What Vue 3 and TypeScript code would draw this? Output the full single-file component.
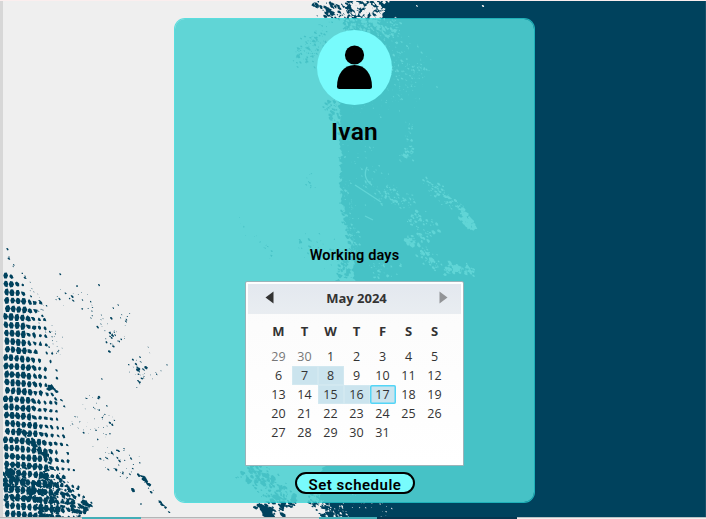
<script setup lang="ts">
type Mark = { x: number; y: number; r: number }

let seed = 20240517
const rnd = (): number => {
  seed = (seed * 1664525 + 1013904223) % 4294967296
  return seed / 4294967296
}
const spread = (): number => rnd() + rnd() + rnd() - 1.5

// A small irregular fleck; a higher roughness gives a more ragged outline.
const fleck = (x: number, y: number, rx: number, ry: number, a = 0, rough = 0.65): string => {
  let d = ''
  for (let i = 0; i < 6; i++) {
    const t = (i * Math.PI) / 3
    const k = 1.25 - rough + rnd() * rough
    const px = Math.cos(t) * rx * k
    const py = Math.sin(t) * ry * k
    const qx = x + px * Math.cos(a) - py * Math.sin(a)
    const qy = y + px * Math.sin(a) + py * Math.cos(a)
    d += (i ? 'L' : 'M') + qx.toFixed(1) + ' ' + qy.toFixed(1)
  }
  return d + 'Z'
}

// Flecks scattered around the line from one point to another.
const trail = (x1: number, y1: number, x2: number, y2: number, width: number, n: number, size: number): string => {
  let d = ''
  const len = Math.hypot(x2 - x1, y2 - y1) || 1
  for (let i = 0; i < n; i++) {
    const t = rnd()
    const o = spread() * width
    const r = size * (0.35 + rnd() * rnd() * 1.3)
    d += fleck(x1 + (x2 - x1) * t - ((y2 - y1) / len) * o, y1 + (y2 - y1) * t + ((x2 - x1) / len) * o, r * 1.3, r * 0.8, 0.7)
  }
  return d
}

const spots = (list: Mark[]): string => list.map(m => fleck(m.x, m.y, m.r * 1.4, m.r, 0.8)).join('')

// Halftone dots: full on the left, thinning along a diagonal edge.
let halftone = ''
for (let row = 0; row < 30; row++) {
  const y = 275.5 + row * 8.2
  const solid = row < 4 ? 9 + row * 6 : 24 + Math.min(row, 19) * 0.5 + Math.max(0, row - 17) * 2.2
  const fade = row < 3 ? 8 : 17 + Math.min(row, 15) * 0.9
  for (let c = 0; c < 15; c++) {
    const x = 5.5 + c * 5.6 + (row % 5) * 0.5
    if (x > solid + fade) break
    const k = x < solid ? 1 : 1 - (x - solid) / fade
    if (k < 0.8 && rnd() > k + 0.4) continue
    const s = 0.5 + 0.5 * k
    halftone += fleck(x, y + c * 0.5, 2.45 * s, 3.5 * s, k < 1 ? -0.5 : 0, k < 1 ? 0.7 : 0.35)
  }
}

const ink =
  halftone +
  trail(3, 247, 26, 278, 3, 9, 1.7) +
  trail(30, 280, 60, 355, 7, 44, 0.9) +
  trail(48, 385, 66, 406, 4, 10, 1.8) +
  trail(55, 300, 90, 292, 9, 14, 1) +
  trail(85, 305, 120, 343, 13, 34, 1) +
  trail(106, 328, 118, 338, 3, 8, 1.4) +
  trail(110, 310, 130, 322, 7, 12, 1) +
  trail(137, 350, 151, 382, 18, 32, 0.95) +
  trail(136, 369, 150, 370, 3, 9, 1.6) +
  trail(85, 400, 118, 430, 12, 25, 0.85) +
  trail(72, 420, 105, 440, 12, 25, 0.85) +
  trail(106, 448, 132, 474, 14, 38, 1.1) +
  trail(133, 467, 169, 513, 3, 20, 1.6) +
  trail(142, 474, 147, 481, 2, 6, 2) +
  trail(18, 429, 52, 462, 3, 60, 1.7) +
  trail(3, 470, 62, 514, 14, 230, 2) +
  trail(40, 475, 86, 512, 11, 180, 2) +
  trail(3, 480, 3, 515, 20, 45, 1.6) +
  trail(314, 0, 370, 9, 14, 100, 1.5) +
  trail(325, 14, 372, 14, 9, 90, 1.9) +
  trail(301, 45, 312, 58, 17, 65, 1.2) +
  trail(315, 24, 340, 90, 17, 85, 1.1) +
  trail(328, 101, 345, 118, 13, 90, 1.6) +
  trail(341, 105, 344, 215, 3, 95, 1.4) +
  trail(345, 210, 354, 260, 4, 65, 1.5) +
  trail(236, 220, 275, 255, 5, 18, 0.8) +
  trail(300, 240, 350, 262, 13, 60, 1) +
  trail(340, 250, 348, 279, 8, 65, 1.6) +
  trail(306, 172, 312, 190, 5, 11, 0.9) +
  trail(248, 466, 290, 509, 14, 210, 2) +
  trail(256, 505, 274, 515, 4, 55, 2.5) +
  trail(315, 490, 330, 513, 10, 85, 1.8) +
  spots([{ x: 133, y: 490, r: 1.8 }, { x: 77, y: 286, r: 1 }, { x: 60, y: 274, r: 0.9 }, { x: 99, y: 285, r: 0.9 }, { x: 99, y: 397, r: 1 }, { x: 102, y: 379, r: 0.8 }, { x: 141, y: 504, r: 0.9 }])

const paper =
  trail(352, 3, 382, 17, 15, 190, 2) +
  trail(342, 24, 400, 30, 10, 140, 1.5) +
  trail(372, 38, 422, 80, 23, 170, 1) +
  trail(350, 104, 428, 88, 23, 75, 0.7) +
  trail(410, 122, 409, 155, 4, 30, 1.1) +
  trail(399, 158, 414, 152, 6, 24, 1.4) +
  trail(350, 135, 383, 205, 15, 75, 0.9) +
  trail(384, 190, 413, 205, 10, 65, 1.2) +
  trail(410, 215, 435, 236, 9, 55, 1.5) +
  trail(424, 180, 463, 212, 6, 85, 1.4) +
  trail(462, 214, 473, 229, 4, 65, 1.9) +
  trail(406, 244, 423, 235, 7, 32, 1.8) +
  trail(420, 250, 440, 270, 7, 38, 1.6) +
  trail(445, 268, 474, 271, 6, 70, 1.8) +
  trail(347, 180, 356, 255, 6, 75, 1) +
  trail(370, 262, 398, 274, 11, 42, 1.1) +
  trail(315, 503, 350, 516, 9, 55, 1.3) +
  trail(345, 496, 402, 513, 12, 30, 0.7) +
  spots([{ x: 417, y: 6, r: 0.8 }, { x: 483, y: 6, r: 0.9 }, { x: 437, y: 87, r: 0.8 }])

// Ragged left boundary of the dark field.
const anchors: [number, number][] = [[351, 0], [345, 20], [338, 60], [336, 90], [341, 115], [341, 195], [345, 218], [352, 242], [354, 280], [340, 380], [322, 475], [321, 502], [329, 519]]
let field = 'M706 0'
for (let i = 0; i < anchors.length - 1; i++) {
  const [x1, y1] = anchors[i]
  const [x2, y2] = anchors[i + 1]
  for (let y = y1; y < y2; y += 2) {
    field += `L${(x1 + ((x2 - x1) * (y - y1)) / (y2 - y1) + (rnd() - 0.5) * 5).toFixed(1)} ${y}`
  }
}
field += 'L330 519L706 519Z'

const weekdays = ['M', 'T', 'W', 'T', 'F', 'S', 'S']
const marked = [7, 8, 15, 16, 17]
const days = [29, 30, ...Array.from({ length: 31 }, (_, i) => i + 1)].map((n, i) => ({
  n,
  outside: i < 2,
  marked: i >= 2 && marked.includes(n),
  today: i >= 2 && n === 17,
}))
</script>

<template>
  <main class="page">
    <svg class="backdrop" viewBox="0 0 706 519" aria-hidden="true">
      <rect width="706" height="519" fill="#efefef" />
      <path :d="field" fill="#00425d" />
      <path :d="ink" fill="#00425d" />
      <path :d="paper" fill="#efefef" />
      <path d="M367 167q-5 11 5 18M355 185l26 17M365 216l8 4" fill="none" stroke="#efefef" stroke-width="1.3" />
      <path d="M0 0h706v1H0z" fill="#fbeeee" />
      <path d="M0 1h3v518H0z" fill="#d7d7d7" />
      <path d="M705 1h1v516h-1z" fill="#16506a" />
      <path d="M0 517h319v1H0z" fill="#b4b6b7" />
      <path d="M0 518h319v1H0z" fill="#d8dadb" />
      <path d="M82 517h59v2H82zM319 517h58v2h-58z" fill="#43aeb7" />
      <path d="M377 517h140v2H377z" fill="#043650" />
      <path d="M517 517h189v1H517z" fill="#b9c1c6" />
      <path d="M517 518h189v1H517z" fill="#f1efed" />
    </svg>

    <section class="card">
      <div class="avatar">
        <svg viewBox="0 0 75 75" aria-hidden="true">
          <circle cx="37.5" cy="25" r="9.6" />
          <path d="M20 56.5C20 44 27 35 37.5 35S55 44 55 56.5Q55 59 52.5 59H22.5Q20 59 20 56.5Z" />
        </svg>
      </div>
      <h1>Ivan</h1>
      <h2>Working days</h2>

      <div class="calendar">
        <header>
          <svg width="9" height="13" viewBox="0 0 9 13"><path d="M8.5 .5v12L.5 6.5z" fill="#333" /></svg>
          <span class="month">May 2024</span>
          <svg width="9" height="13" viewBox="0 0 9 13"><path d="M.5 .5v12l8-6z" fill="#929497" /></svg>
        </header>
        <div class="weekdays">
          <span v-for="(d, i) in weekdays" :key="i">{{ d }}</span>
        </div>
        <div class="days">
          <span v-for="(d, i) in days" :key="i" :class="{ outside: d.outside, marked: d.marked, today: d.today }">{{ d.n }}</span>
        </div>
      </div>

      <button type="button">Set schedule</button>
    </section>
  </main>
</template>

<style>
body {
  margin: 0;
  overflow: hidden;
}
</style>

<style scoped>
.page {
  position: relative;
  width: 706px;
  height: 519px;
  overflow: hidden;
  box-sizing: border-box;
  padding: 18px 0 0 174px;
}
.backdrop {
  position: absolute;
  inset: 0;
  width: 706px;
  height: 519px;
}
.card {
  position: relative;
  box-sizing: border-box;
  width: 361px;
  height: 485px;
  border: 1px solid rgba(40, 215, 216, 0.75);
  border-radius: 11px;
  background: rgba(78, 209, 210, 0.895);
  background-clip: padding-box;
  display: flex;
  flex-direction: column;
  align-items: center;
  padding-top: 11px;
  font-family: Roboto, 'Liberation Sans', sans-serif;
  color: #000;
}
.avatar {
  width: 75px;
  height: 75px;
  border-radius: 50%;
  background: #78fbfc;
}
.avatar svg {
  display: block;
}
h1 {
  margin: 11px 0 0;
  height: 32px;
  font-size: 24.5px;
  line-height: 32px;
  font-weight: 600;
  letter-spacing: 0.2px;
}
h2 {
  margin: 98px 0 0;
  height: 20px;
  font-size: 14.5px;
  line-height: 20px;
  font-weight: 600;
  letter-spacing: 0.15px;
}
.calendar {
  box-sizing: border-box;
  margin-top: 15px;
  width: 219px;
  height: 185px;
  border: 1px solid #9bb3b9;
  border-radius: 2px 2px 0 0;
  background: linear-gradient(#fbfbfb, #fff);
  box-shadow: inset 0 0 0 2px #fff;
  padding: 2px;
  font-family: 'Open Sans', 'Noto Sans', sans-serif;
  color: #333;
}
header {
  display: flex;
  align-items: center;
  justify-content: space-between;
  height: 30px;
  padding: 0 13px 0 17px;
  background: linear-gradient(#e3e8ef, #e9edf1);
}
header svg {
  margin-top: -3px;
}
.month {
  margin-top: -2px;
  font-size: 13px;
  font-weight: 700;
}
.weekdays,
.days {
  display: grid;
  grid-template-columns: repeat(7, 26px);
  padding-left: 17.5px;
  text-align: center;
}
.weekdays {
  margin-top: 9px;
  margin-bottom: 7px;
  line-height: 17px;
  font-size: 13px;
  font-weight: 700;
}
.days {
  grid-auto-rows: 19px;
  line-height: 19px;
  font-size: 12.5px;
}
.outside {
  color: #777;
}
.marked {
  background: #cbe4ee;
  box-shadow: inset 0 0 0 1px #d2e8f0;
  border-radius: 1px;
}
.today {
  box-shadow: inset 0 0 0 1.5px #53d5f7;
  border-radius: 2px;
}
button {
  box-sizing: border-box;
  width: 120px;
  height: 22px;
  margin: 6px 0 0 1px;
  padding: 2px 0 0;
  border: 2px solid #000;
  border-radius: 11px;
  background: #78fbfc;
  color: #000;
  font-family: Roboto, 'Liberation Sans', sans-serif;
  font-size: 15px;
  font-weight: 600;
  line-height: 18px;
  letter-spacing: 0.5px;
  white-space: nowrap;
}
</style>
